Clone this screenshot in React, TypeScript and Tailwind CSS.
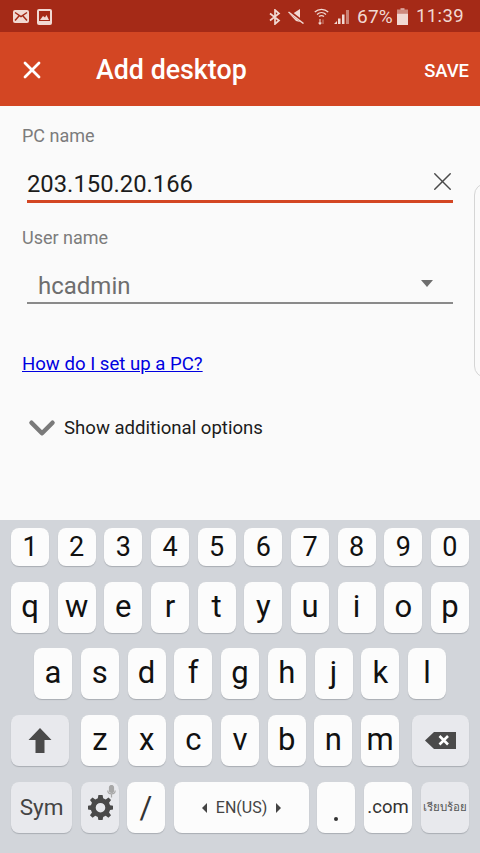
import { X, ChevronDown } from 'lucide-react';

const numberRow = ['1', '2', '3', '4', '5', '6', '7', '8', '9', '0'];
const topRow = ['q', 'w', 'e', 'r', 't', 'y', 'u', 'i', 'o', 'p'];
const homeRow = ['a', 's', 'd', 'f', 'g', 'h', 'j', 'k', 'l'];
const bottomRow = ['z', 'x', 'c', 'v', 'b', 'n', 'm'];

const keyBase = 'flex items-center justify-center rounded-[8px] shadow-[0_1px_1px_#a9adb3] text-[#111]';

function Key({ label, h = 'h-[51px]' }: { label: string; h?: string }) {
  return (
    <div className={`${keyBase} ${h} flex-1 bg-[#fcfcfc] text-[31px] leading-none pb-[2px]`}>
      {label}
    </div>
  );
}

function StatusBar() {
  return (
    <div className="h-8 bg-[#a52a17] flex items-center pl-[13px] pr-[16px] pt-[1px] text-[#f1d9d3]">
      {/* mail */}
      <svg width="16" height="13" viewBox="0 0 16 13" className="mr-[8px]">
        <rect width="16" height="13" rx="2" fill="#f1d9d3" />
        <path d="M2 2.5 L8 6.5 L14 2.5 M2 10.5 L6 6 M14 10.5 L10 6" stroke="#a52a17" strokeWidth="1.5" fill="none" />
      </svg>
      {/* gallery */}
      <svg width="15" height="16" viewBox="0 0 15 16">
        <rect width="15" height="16" rx="2" fill="#f1d9d3" />
        <rect x="2" y="2" width="11" height="10" fill="#a52a17" />
        <path d="M3 11 L6 7 L8 8.5 L9.5 6 L12 11 Z" fill="#f1d9d3" />
      </svg>
      <div className="ml-auto flex items-center">
        {/* bluetooth */}
        <svg width="12" height="16" viewBox="0 0 12 16" fill="none" stroke="#f1d9d3" strokeWidth="1.7">
          <path d="M1 4.5 L10 11.5 L6 15 V1 L10 4.5 L1 11.5" />
        </svg>
        {/* muted speaker */}
        <svg width="16" height="15" viewBox="0 0 16 15" className="ml-[7px]">
          <path d="M1 4.5 H5 L12 0 V13 L8 12 Z" fill="#f1d9d3" />
          <path d="M0.5 2 L15.5 13.5" stroke="#a52a17" strokeWidth="3" />
          <path d="M0.5 3 L15.5 14.5" stroke="#f1d9d3" strokeWidth="1.5" />
        </svg>
        {/* wifi */}
        <svg width="15" height="17" viewBox="0 0 15 17" fill="none" stroke="#f1d9d3" strokeWidth="1.3" className="ml-[10px]">
          <path d="M0.8 4 C4.5 0.4 10.5 0.4 14.2 4" />
          <path d="M3 6.4 C5.6 4 9.4 4 12 6.4" />
          <path d="M5 8.6 C6.5 7.4 8.5 7.4 10 8.6" />
          <path d="M6 11 V16 M4.6 14.6 L6 16.2 L7.4 14.6" strokeWidth="1.1" />
          <path d="M9 16 V11.5" strokeOpacity="0.5" strokeWidth="1.1" />
        </svg>
        {/* signal */}
        <svg width="16" height="15" viewBox="0 0 16 15" className="ml-[5px]">
          <path d="M0 15 L3 12 V15 Z" fill="#f1d9d3" />
          <rect x="4" y="9.5" width="2.5" height="5.5" fill="#f1d9d3" />
          <rect x="8" y="5.5" width="2.5" height="9.5" fill="#f1d9d3" />
          <rect x="12" y="1" width="3" height="14" fill="#f1d9d3" opacity="0.5" />
        </svg>
        <span className="ml-[7px] text-[19px] leading-none tracking-[0.2px]">67%</span>
        {/* battery */}
        <svg width="11" height="17" viewBox="0 0 11 17" className="ml-[4px]">
          <rect x="3.5" y="0" width="4" height="2" fill="#f1d9d3" opacity="0.6" />
          <rect x="0" y="1.5" width="11" height="4" fill="#f1d9d3" opacity="0.55" />
          <rect x="0" y="5.5" width="11" height="11.5" fill="#f1d9d3" />
        </svg>
        <span className="ml-[8px] text-[18.5px] leading-none tracking-[0.4px]">11:39</span>
      </div>
    </div>
  );
}

function AppBar() {
  return (
    <div className="h-[74px] bg-[#d34623] flex items-center pt-[1px] text-white shadow-[0_1px_1px_#d8c4be]">
      <X size={28} strokeWidth={2.4} className="ml-[18px]" />
      <span className="ml-[50px] mt-[2px] text-[26.8px] font-medium leading-none">Add desktop</span>
      <span className="ml-auto mr-[11px] mt-[4px] text-[18.4px] font-medium leading-none">SAVE</span>
    </div>
  );
}

function Form() {
  return (
    <div className="relative h-[414px] bg-[#fafafa] pl-[22px] pr-[27px]">
      <div className="pt-[20px] text-[18px] leading-[20px] text-[#7c7c7c]">PC name</div>

      <div className="ml-[5px] mt-[18px] flex h-[39px] items-center justify-between border-b-[3px] border-[#d34623] pt-[6px]">
        <span className="text-[23.8px] leading-none text-[#1c1c1c]">203.150.20.166</span>
        <X size={31} strokeWidth={1.1} className="mr-[-5px] mt-[-7px] text-[#4a4a4a]" />
      </div>

      <div className="mt-[25px] text-[18px] leading-[20px] text-[#7c7c7c]">User name</div>

      <div className="ml-[5px] mt-[17px] flex h-[39px] items-center justify-between border-b-[2px] border-[#8a8a8a] pl-[11px] pr-[20px] pt-[4px]">
        <span className="text-[24px] leading-none text-[#6e6e6e]">hcadmin</span>
        <div className="mt-[-4px] h-0 w-0 border-x-[6.5px] border-t-[7px] border-x-transparent border-t-[#6e6e6e]" />
      </div>

      <a href="#" className="mt-[49px] block text-[18.6px] leading-[22px] text-[#0000e0] underline">
        How do I set up a PC?
      </a>

      <div className="mt-[32px] flex items-center">
        <ChevronDown size={42} strokeWidth={2.6} className="ml-[-1px] mr-[-2px] text-[#7a7a7a]" />
        <span className="ml-[3px] text-[18.6px] leading-none text-[#1c1c1c]">Show additional options</span>
      </div>

      {/* edge of the side panel */}
      <div className="absolute right-[-10px] top-[77px] h-[195px] w-[16px] rounded-l-[12px] border border-[#d5d5d5]" />
    </div>
  );
}

function Keyboard() {
  return (
    <div className="h-[333px] bg-[#d2d5da] px-[11px] pt-[8px]">
      <div className="flex gap-[8.6px]">
        {numberRow.map((k) => (
          <div key={k} className={`${keyBase} h-[38px] flex-1 bg-[#fcfcfc] text-[27px] leading-none`}>{k}</div>
        ))}
      </div>

      <div className="mt-[16px] flex gap-[8.6px]">
        {topRow.map((k) => <Key key={k} label={k} />)}
      </div>

      <div className="mt-[15px] flex gap-[8.75px] px-[23px]">
        {homeRow.map((k) => <Key key={k} label={k} />)}
      </div>

      <div className="mt-[16px] flex">
        <div className={`${keyBase} h-[51px] w-[58px] shrink-0 bg-[#e8e9ed]`}>
          <svg width="24" height="25" viewBox="0 0 24 25" fill="#4a4a4a">
            <path d="M12 0 L23.5 12 H16.5 V25 H7.5 V12 H0.5 Z" />
          </svg>
        </div>
        <div className="ml-[12px] flex flex-1 gap-[8.75px]">
          {bottomRow.map((k) => <Key key={k} label={k} />)}
        </div>
        <div className={`${keyBase} ml-[13px] h-[51px] w-[57px] shrink-0 bg-[#e8e9ed]`}>
          <svg width="31" height="17" viewBox="0 0 31 17">
            <path d="M9 0 H31 V17 H9 L0 8.5 Z" fill="#4a4a4a" />
            <path d="M14.5 4 L23 12.5 M23 4 L14.5 12.5" stroke="#fff" strokeWidth="2.6" />
          </svg>
        </div>
      </div>

      <div className="mt-[16px] flex h-[51px]">
        <div className={`${keyBase} w-[61px] bg-[#e8e9ed] text-[22.5px] text-[#444]`}>Sym</div>
        <div className={`${keyBase} relative ml-[9px] w-[38px] bg-[#e8e9ed]`}>
          <svg width="25" height="25" viewBox="0 0 24 24" fill="#4a4a4a">
            <path fillRule="evenodd" d="M10 0 H14 L14.6 3.2 L17 4.2 L19.7 2.3 L22.1 4.8 L20.2 7.4 L21.2 9.8 L24 10.3 V13.9 L21.2 14.4 L20.2 16.8 L22.1 19.4 L19.6 21.9 L17 20 L14.6 21 L14 24 H10 L9.4 21 L7 20 L4.4 21.9 L1.9 19.4 L3.8 16.8 L2.8 14.4 L0 13.9 V10.3 L2.8 9.8 L3.8 7.4 L1.9 4.8 L4.3 2.3 L7 4.2 L9.4 3.2 Z M12 7.6 A4.6 4.6 0 1 0 12 16.8 A4.6 4.6 0 1 0 12 7.6 Z" />
          </svg>
          <svg width="9" height="13" viewBox="0 0 9 13" className="absolute right-[3px] top-[3px]" fill="none" stroke="#a8a8a8" strokeWidth="1.2">
            <rect x="2.5" y="0.5" width="4" height="7" rx="2" fill="#a8a8a8" />
            <path d="M0.8 5.5 C0.8 10 8.2 10 8.2 5.5 M4.5 9 V12.5" />
          </svg>
        </div>
        <div className={`${keyBase} ml-[8px] w-[38px] bg-[#fcfcfc] text-[31px] leading-none text-[#333]`}>/</div>
        <div className={`${keyBase} ml-[9px] w-[135px] gap-[9px] bg-[#fcfcfc] text-[16px] text-[#444]`}>
          <div className="h-0 w-0 border-y-[5px] border-r-[5px] border-y-transparent border-r-[#444]" />
          <span>EN(US)</span>
          <div className="h-0 w-0 border-y-[5px] border-l-[5px] border-y-transparent border-l-[#444]" />
        </div>
        <div className={`${keyBase} ml-[8px] w-[38px] bg-[#fcfcfc]`}>
          <div className="mt-[22px] h-[4px] w-[4px] rounded-full bg-[#333]" />
        </div>
        <div className={`${keyBase} ml-[9px] w-[48px] bg-[#fcfcfc] text-[18.5px] text-[#333]`}>.com</div>
        <div className={`${keyBase} ml-[9px] w-[48px] bg-[#e8e9ed] text-[11.5px] text-[#555]`}>เรียบร้อย</div>
      </div>
    </div>
  );
}

export default function App() {
  return (
    <div className="flex h-[853px] w-[480px] flex-col overflow-hidden font-['Roboto','Noto_Sans',sans-serif]">
      <StatusBar />
      <AppBar />
      <Form />
      <Keyboard />
    </div>
  );
}
